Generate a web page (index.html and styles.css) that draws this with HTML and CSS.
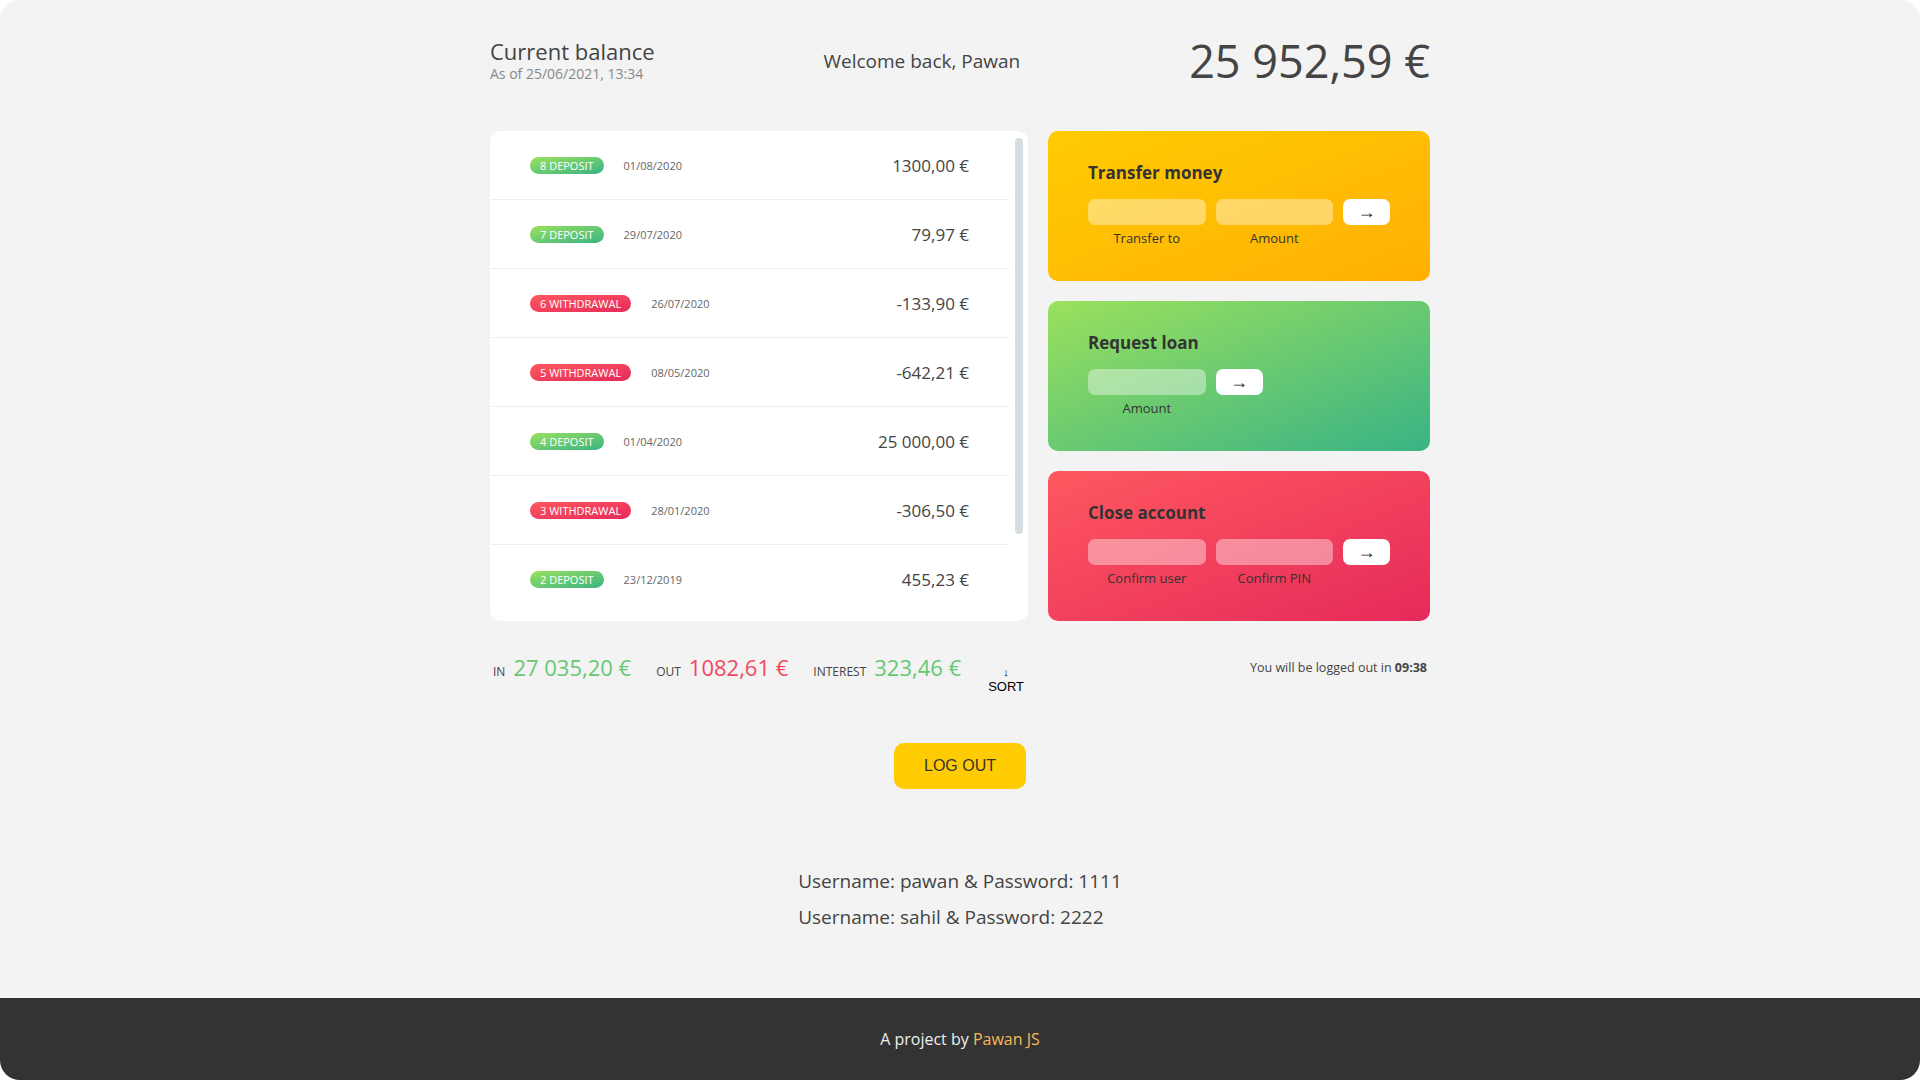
FILE: index.html
```html
<!DOCTYPE html>
<html lang="en">
<head>
<meta charset="utf-8">
<title>Bankist</title>
<link rel="stylesheet" href="styles.css">
</head>
<body>
<div class="page">
  <main class="app">
    <header class="balance">
      <div class="balance__info">
        <p class="balance__label">Current balance</p>
        <p class="balance__date">As of <span>25/06/2021, 13:34</span></p>
      </div>
      <p class="welcome">Welcome back, Pawan</p>
      <p class="balance__value">25 952,59 €</p>
    </header>

    <section class="grid">
      <div class="movements">
        <div class="movements__list">
          <div class="row"><span class="type type--deposit">8 deposit</span><span class="date">01/08/2020</span><span class="value">1300,00 €</span></div>
          <div class="row"><span class="type type--deposit">7 deposit</span><span class="date">29/07/2020</span><span class="value">79,97 €</span></div>
          <div class="row"><span class="type type--withdrawal">6 withdrawal</span><span class="date">26/07/2020</span><span class="value">-133,90 €</span></div>
          <div class="row"><span class="type type--withdrawal">5 withdrawal</span><span class="date">08/05/2020</span><span class="value">-642,21 €</span></div>
          <div class="row"><span class="type type--deposit">4 deposit</span><span class="date">01/04/2020</span><span class="value">25 000,00 €</span></div>
          <div class="row"><span class="type type--withdrawal">3 withdrawal</span><span class="date">28/01/2020</span><span class="value">-306,50 €</span></div>
          <div class="row"><span class="type type--deposit">2 deposit</span><span class="date">23/12/2019</span><span class="value">455,23 €</span></div>
        </div>
        <div class="scrollbar"><div class="scrollbar__thumb"></div></div>
      </div>

      <div class="operations">
        <div class="operation operation--transfer">
          <h2>Transfer money</h2>
          <form class="form form--3">
            <input type="text" class="form__input">
            <input type="number" class="form__input">
            <button type="button" class="form__btn">→</button>
            <label class="form__label">Transfer to</label>
            <label class="form__label">Amount</label>
          </form>
        </div>
        <div class="operation operation--loan">
          <h2>Request loan</h2>
          <form class="form form--loan">
            <input type="number" class="form__input">
            <button type="button" class="form__btn">→</button>
            <label class="form__label form__label--first">Amount</label>
          </form>
        </div>
        <div class="operation operation--close">
          <h2>Close account</h2>
          <form class="form form--3">
            <input type="text" class="form__input">
            <input type="password" class="form__input">
            <button type="button" class="form__btn">→</button>
            <label class="form__label">Confirm user</label>
            <label class="form__label">Confirm PIN</label>
          </form>
        </div>
      </div>

      <div class="summary">
        <p class="summary__label">In</p>
        <p class="summary__value summary__value--in">27 035,20 €</p>
        <p class="summary__label">Out</p>
        <p class="summary__value summary__value--out">1082,61 €</p>
        <p class="summary__label">Interest</p>
        <p class="summary__value summary__value--in">323,46 €</p>
        <button class="btn--sort"><span class="sort-arrow">↓</span><span>SORT</span></button>
      </div>

      <p class="logout-timer">You will be logged out in <span>09:38</span></p>
    </section>

    <div class="logout-wrap"><button class="btn--logout">LOG OUT</button></div>

    <div class="creds">
      <p>Username: pawan &amp; Password: 1111</p>
      <p>Username: sahil &amp; Password: 2222</p>
    </div>
  </main>

  <footer class="footer">
    <p>A project by <a href="#">Pawan JS</a></p>
  </footer>
</div>
</body>
</html>
```

FILE: styles.css
```css
* { margin: 0; padding: 0; box-sizing: border-box; }

html { background: #ffffff; }

body {
  margin: 0;
  font-family: "Open Sans", "Noto Sans", sans-serif;
  color: #444;
}

.page {
  height: 1080px;
  background: #f3f3f3;
  border-radius: 20px;
  overflow: hidden;
  display: flex;
  flex-direction: column;
}

.app {
  width: 940px;
  margin: 0 auto;
  padding-top: 30px;
  flex: 1;
}

/* header */
.balance {
  display: flex;
  justify-content: space-between;
  align-items: center;
}
.balance__label {
  font-size: 22px;
  font-weight: 500;
  line-height: 1.2;
}
.balance__date {
  font-size: 14px;
  color: #888;
}
.welcome {
  font-size: 19px;
  font-weight: 500;
}
.balance__value {
  font-size: 45px;
  font-weight: 400;
}

/* grid */
.grid {
  margin-top: 40px;
  display: grid;
  grid-template-columns: 538px 382px;
  column-gap: 20px;
  row-gap: 31px;
}

.movements {
  background: #fff;
  border-radius: 10px;
  height: 490px;
  overflow: hidden;
  display: flex;
}
.movements__list {
  flex: 1;
  overflow: hidden;
}
.scrollbar {
  width: 19px;
  padding: 7px 5px 0 6px;
}
.scrollbar__thumb {
  height: 396px;
  background: #d6dde1;
  border-radius: 4px;
}

.row {
  display: flex;
  align-items: center;
  padding: 22.5px 40px;
  border-bottom: 1px solid #eee;
}
.row:last-child { border-bottom: none; }
.type {
  font-size: 11px;
  text-transform: uppercase;
  font-weight: 500;
  color: #fff;
  padding: 1px 10px;
  border-radius: 100px;
  margin-right: 20px;
}
.type--deposit { background-image: linear-gradient(to top left, #39b385, #9be15d); }
.type--withdrawal { background-image: linear-gradient(to top left, #e52a5a, #ff585f); }
.date {
  font-size: 11px;
  font-weight: 500;
  color: #666;
}
.value {
  font-size: 17px;
  margin-left: auto;
}

/* operations */
.operations {
  display: flex;
  flex-direction: column;
  gap: 20px;
}
.operation {
  height: 150px;
  border-radius: 10px;
  padding: 30px 40px;
  color: #333;
}
.operation h2 {
  font-size: 17px;
  font-weight: 700;
  color: #333;
  margin-bottom: 15px;
}
.operation--transfer { background-image: linear-gradient(to top left, #ffb003, #ffcb03); }
.operation--loan { background-image: linear-gradient(to top left, #39b385, #9be15d); }
.operation--close { background-image: linear-gradient(to top left, #e52a5a, #ff585f); }

.form {
  display: grid;
  column-gap: 10px;
  row-gap: 4px;
}
.form--3 { grid-template-columns: 2.5fr 2.5fr 1fr; }
.form--loan { grid-template-columns: 2.5fr 1fr 2.5fr; }

.form__input {
  width: 100%;
  border: none;
  font-family: inherit;
  font-size: 15px;
  text-align: center;
  color: #333;
  padding: 3px 10px;
  border-radius: 7px;
  background-color: rgba(255, 255, 255, 0.4);
  outline: none;
}
.form__label {
  font-size: 13px;
  text-align: center;
}
.form__label--first { grid-column: 1; }
.form__btn {
  border: none;
  border-radius: 7px;
  font-size: 18px;
  background: #fff;
  color: #222;
  font-family: "Liberation Sans", sans-serif;
  cursor: pointer;
}

/* summary */
.summary {
  display: flex;
  align-items: baseline;
  padding: 0 3px;
}
.summary__label {
  font-size: 12px;
  font-weight: 500;
  text-transform: uppercase;
  margin-right: 8px;
}
.summary__value {
  font-size: 22px;
  margin-right: 25px;
  line-height: 30px;
}
.summary__value--in { color: #66c873; }
.summary__value--out { color: #f5465d; }

.btn--sort {
  display: flex;
  flex-direction: column;
  align-items: center;
  border: none;
  background: none;
  font-family: "Liberation Sans", sans-serif;
  font-size: 13px;
  font-weight: 500;
  color: #000;
  line-height: 13.5px;
  cursor: pointer;
  margin-left: 2px;
}
.sort-arrow { font-size: 11px; }

.logout-timer {
  font-size: 12.5px;
  text-align: right;
  padding-right: 3px;
  align-self: start;
  padding-top: 7px;
}
.logout-timer span { font-weight: 700; }

/* logout */
.logout-wrap {
  display: flex;
  justify-content: center;
  margin-top: 50px;
}
.btn--logout {
  background: #ffcb03;
  border: none;
  border-radius: 10px;
  padding: 14px 30px;
  font-family: "Liberation Sans", sans-serif;
  font-size: 16px;
  color: #333;
  cursor: pointer;
}

.creds {
  width: fit-content;
  margin: 75px auto 0;
  text-align: left;
  font-size: 19px;
  line-height: 35.5px;
  color: #444;
}

/* footer */
.footer {
  height: 82px;
  background: #333;
  display: flex;
  align-items: center;
  justify-content: center;
  font-size: 16px;
  color: #eee;
}
.footer a {
  color: #f7b955;
  text-decoration: none;
}
```
